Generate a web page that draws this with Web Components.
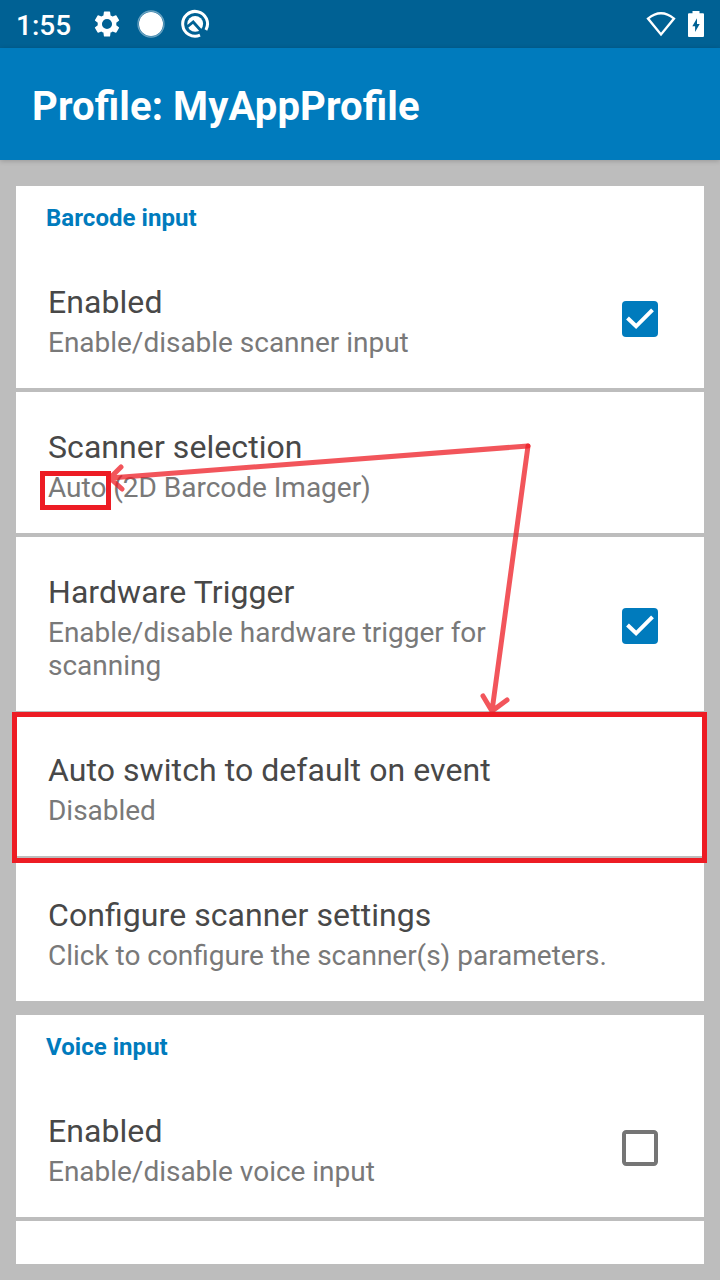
<!DOCTYPE html>
<html lang="en">
<head>
<meta charset="utf-8">
<title>Profile: MyAppProfile</title>
<style>
html,body{margin:0;height:100%;overflow:hidden}
body{font-family:Roboto,"Noto Sans",sans-serif;font-feature-settings:"liga" 1;background:#bdbdbd}
</style>
</head>
<body>
<profile-screen></profile-screen>
<script>
const define = (name, html, setup) => customElements.define(name, class extends HTMLElement {
  constructor() {
    super();
    const t = document.createElement('template');
    t.innerHTML = html;
    this.attachShadow({mode: 'open'}).append(t.content.cloneNode(true));
  }
  connectedCallback() { if (setup) setup(this, this.shadowRoot); }
});

define('status-bar', `<style>
:host{display:flex;height:48px;background:#006194;color:#fff;align-items:center;box-sizing:border-box;padding:0 16px 0 16px}
.time{font-size:28px;font-weight:500;line-height:48px;width:77px;padding-top:3px;box-sizing:border-box}
svg{display:block;flex:none}
.gear{margin-right:15px}.dot{margin-right:14px}.space{flex:1}.wifi{margin-right:11px}
</style>
<span class="time">1:55</span>
<svg class="gear" width="28" height="28" viewBox="1.2 1.2 21.6 21.6" fill="#fff"><path d="M19.14 12.94c.04-.3.06-.61.06-.94s-.02-.64-.07-.94l2.03-1.58a.49.49 0 0 0 .12-.61l-1.92-3.32a.49.49 0 0 0-.59-.22l-2.39.96a7 7 0 0 0-1.62-.94l-.36-2.54a.48.48 0 0 0-.48-.41h-3.84a.48.48 0 0 0-.47.41l-.36 2.54c-.59.24-1.13.57-1.62.94l-2.39-.96a.48.48 0 0 0-.59.22L2.74 8.87a.48.48 0 0 0 .12.61l2.03 1.58a6 6 0 0 0-.02 1.88l-2.03 1.58a.49.49 0 0 0-.12.61l1.92 3.32c.12.22.37.29.59.22l2.39-.96c.5.38 1.03.7 1.62.94l.36 2.54c.05.24.24.41.48.41h3.84c.24 0 .44-.17.47-.41l.36-2.54c.59-.24 1.13-.56 1.62-.94l2.39.96c.22.08.47 0 .59-.22l1.92-3.32a.48.48 0 0 0-.12-.61zM12 15.9a3.9 3.9 0 1 1 0-7.8 3.9 3.9 0 0 1 0 7.8z"/></svg>
<svg class="dot" width="30" height="30"><circle cx="15" cy="15" r="13" fill="none" stroke="#6aa2c0" stroke-width="1.3"/><circle cx="15" cy="15" r="12" fill="#fff"/></svg>
<svg width="30" height="30" viewBox="0 0 30 30"><path d="M20 26.2A12.4 12.4 0 1 1 25.9 20.9" fill="none" stroke="#fff" stroke-width="3"/><circle cx="15.2" cy="14.8" r="7.9" fill="#fff"/><path d="M7 18L13.2 13L23.5 24.5" fill="none" stroke="#006194" stroke-width="2.8"/></svg>
<span class="space"></span>
<svg class="wifi" width="32" height="28" viewBox="0 0 32 28"><path d="M3 8.6Q16-2 29 8.6L16 24.4Z" fill="none" stroke="#fff" stroke-width="2.3"/></svg>
<svg width="16" height="28" viewBox="0 0 16 28"><path d="M4.5 1h7v2.3H15a1 1 0 0 1 1 1V26a1 1 0 0 1-1 1H1a1 1 0 0 1-1-1V4.3a1 1 0 0 1 1-1h3.5z" fill="#fff"/><path d="M9 8.2L4.3 16.3h2.8V22l4.6-8.1H9z" fill="#006194"/></svg>`);

define('title-bar', `<style>
:host{display:block;position:relative;height:112px;background:#007bbd;box-shadow:0 1px 5px rgba(0,0,0,.2)}
h1{margin:0;padding:3px 32px 0;font-size:40px;line-height:112px;height:109px;font-weight:700;color:#fff;letter-spacing:.11px}
</style><h1><slot></slot></h1>`);

define('check-box', `<style>
:host{display:block;width:36px;height:36px;flex:none}svg{display:block}
.on{display:none}:host([checked]) .on{display:block}:host([checked]) .off{display:none}
</style>
<svg class="on" width="36" height="36"><rect width="36" height="36" rx="4" fill="#007bbd"/><path d="M5.5 17l8.6 8.3L30.5 8.9" fill="none" stroke="#fff" stroke-width="4"/></svg>
<svg class="off" width="36" height="36"><rect x="2" y="2" width="32" height="32" rx="2.2" fill="none" stroke="#757575" stroke-width="4"/></svg>`);

define('pref-row', `<style>
:host{display:flex;align-items:center;background:#fff;padding:36px 46px 29px 32px}
.text{flex:1;margin-right:96px}
:host([wide]) .text{margin-right:0}
.title{font-size:32px;line-height:38px;color:#484848;letter-spacing:.07px}
.sub{margin-top:5px;font-size:28px;line-height:33px;color:#797979;letter-spacing:-.02px}
::slotted(check-box){margin-top:-4px}
</style><div class="text"><div class="title"><slot name="title"></slot></div><div class="sub"><slot></slot></div></div><slot name="control"></slot>`);

define('pref-group', `<style>
:host{display:flex;flex-direction:column;gap:4px}
.first{background:#fff}
h2{margin:0;box-sizing:border-box;height:61px;padding:17px 30px 0;font-size:24px;line-height:30px;font-weight:700;color:#007bbd;letter-spacing:.04px}
</style><div class="first"><h2></h2><slot name="first"></slot></div><slot></slot>`,
(el, root) => root.querySelector('h2').textContent = el.getAttribute('heading'));

define('annotation-layer', `<style>
:host{position:absolute;inset:0;pointer-events:none}svg{display:block}
</style><svg width="720" height="1280" fill="none">
<g shape-rendering="crispEdges" stroke="#ed1c24" stroke-width="5"><rect x="42.5" y="473.5" width="66" height="34"/><rect x="14.5" y="714.5" width="690" height="146"/></g>
<g stroke="#ed1c24" stroke-opacity=".75" stroke-width="5" stroke-linecap="round"><path d="M528 446L110 478M121 467L110 478L122 489"/><path d="M528 446L492 711M483 696L492 711L507 700"/></g></svg>`);

define('profile-screen', `<style>
:host{display:flex;flex-direction:column;position:relative;width:720px;height:1280px;overflow:hidden;background:#bdbdbd}
main{display:flex;flex-direction:column;gap:14px;padding:26px 16px 0}
.next{height:43px;background:#fff}
</style>
<status-bar></status-bar>
<title-bar>Profile: MyAppProfile</title-bar>
<main>
<pref-group heading="Barcode input">
<pref-row slot="first"><span slot="title">Enabled</span>Enable/disable scanner input<check-box slot="control" checked></check-box></pref-row>
<pref-row><span slot="title">Scanner selection</span>Auto (2D Barcode Imager)</pref-row>
<pref-row><span slot="title">Hardware Trigger</span>Enable/disable hardware trigger for scanning<check-box slot="control" checked></check-box></pref-row>
<pref-row wide><span slot="title">Auto switch to default on event</span>Disabled</pref-row>
<pref-row wide><span slot="title">Configure scanner settings</span>Click to configure the scanner(s) parameters.</pref-row>
</pref-group>
<pref-group heading="Voice input">
<pref-row slot="first"><span slot="title">Enabled</span>Enable/disable voice input<check-box slot="control"></check-box></pref-row>
<div class="next"></div>
</pref-group>
</main>
<annotation-layer></annotation-layer>`);
</script>
</body>
</html>
